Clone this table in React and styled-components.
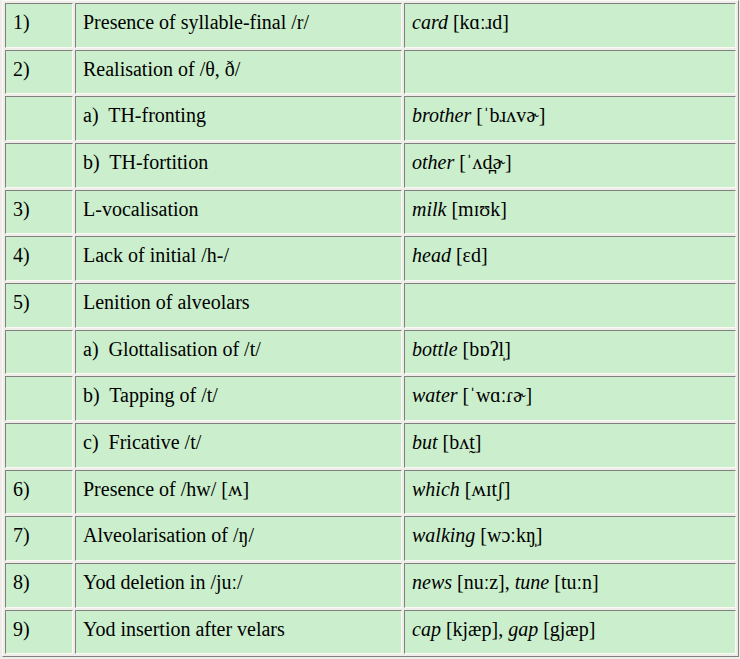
import React from 'react';
import styled, { createGlobalStyle } from 'styled-components';

const GlobalStyle = createGlobalStyle`
  html, body {
    margin: 0;
    padding: 0;
    background: #efede7;
  }
  body {
    font-family: "Liberation Serif", "DejaVu Serif", serif;
    color: #000;
  }
`;

const Page = styled.div`
  padding: 0 0 0 2px;
`;

const Table = styled.table`
  width: 737px;
  border-collapse: separate;
  border-spacing: 2px;
  border: 1px solid;
  border-color: #fbfaf6 #808080 #808080 #fbfaf6;
  table-layout: fixed;
`;

const Cell = styled.td`
  box-sizing: border-box;
  height: 44.67px;
  width: ${(p) => p.$width}px;
  padding: 7px 8px 0 7px;
  vertical-align: top;
  background: #cbefcd;
  border: 1px solid;
  border-color: #808080 #fbfaf6 #fbfaf6 #808080;
  font-size: 20px;
  line-height: 23px;
  white-space: nowrap;
`;

const Example = styled.span`
  font-family: "Liberation Serif", "DejaVu Serif", serif;
  font-style: italic;
`;

const Ipa = styled.span`
  font-family: "Liberation Serif", "DejaVu Serif", serif;
`;

const rows = [
  ['1)', 'Presence of syllable-final /r/', [['card', 'kɑːɹd']]],
  ['2)', 'Realisation of /θ, ð/', []],
  ['', 'a)\u00a0 TH-fronting', [['brother', 'ˈbɹʌvɚ']]],
  ['', 'b)\u00a0 TH-fortition', [['other', 'ˈʌd̪ɚ']]],
  ['3)', 'L-vocalisation', [['milk', 'mɪʊk']]],
  ['4)', 'Lack of initial /h-/', [['head', 'ɛd']]],
  ['5)', 'Lenition of alveolars', []],
  ['', 'a)\u00a0 Glottalisation of /t/', [['bottle', 'bɒʔl̩']]],
  ['', 'b)\u00a0 Tapping of /t/', [['water', 'ˈwɑːɾɚ']]],
  ['', 'c)\u00a0 Fricative /t/', [['but', 'bʌt̰']]],
  ['6)', 'Presence of /hw/ [ʍ]', [['which', 'ʍɪtʃ']]],
  ['7)', 'Alveolarisation of /ŋ/', [['walking', 'wɔːkŋ̩']]],
  ['8)', 'Yod deletion in /juː/', [['news', 'nuːz'], ['tune', 'tuːn']]],
  ['9)', 'Yod insertion after velars', [['cap', 'kjæp'], ['gap', 'gjæp']]],
];

const App = () => (
  <>
    <GlobalStyle />
    <Page>
      <Table>
        <tbody>
          {rows.map(([num, feature, examples], i) => (
            <tr key={`row-${i}`}>
              <Cell $width={68}>{num}</Cell>
              <Cell $width={327}>{feature}</Cell>
              <Cell $width={332}>
                {examples.map(([word, ipa], j) => (
                  <React.Fragment key={word}>
                    {j > 0 && ', '}
                    <Example>{word}</Example>
                    {' '}
                    <Ipa>[{ipa}]</Ipa>
                  </React.Fragment>
                ))}
              </Cell>
            </tr>
          ))}
        </tbody>
      </Table>
    </Page>
  </>
);

export default App;
